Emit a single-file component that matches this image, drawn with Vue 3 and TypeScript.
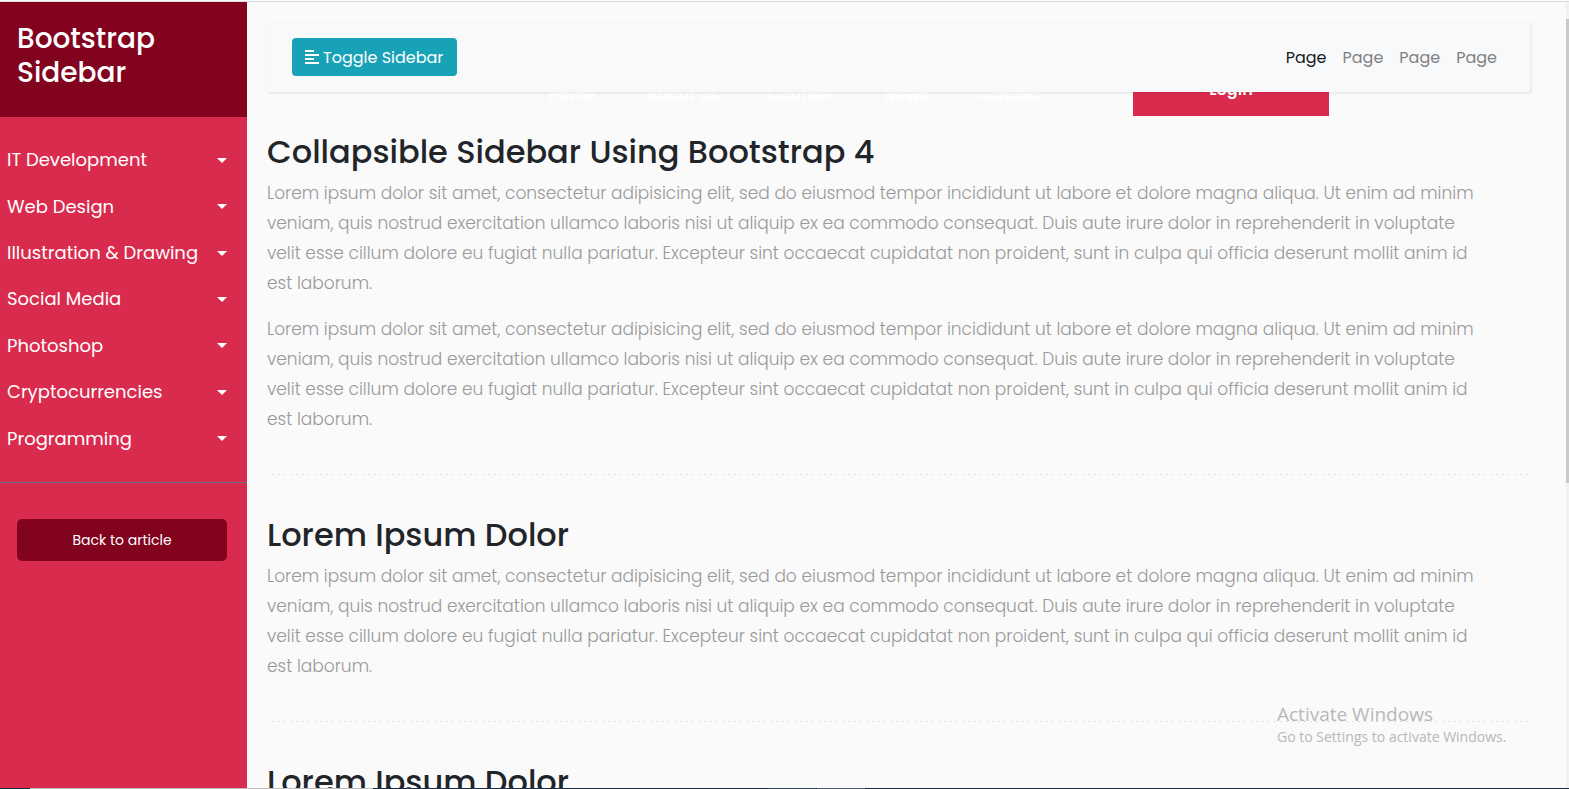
<script setup lang="ts">
import { ref } from 'vue'

const collapsed = ref(false)
const topics: string[] = [
  'IT Development',
  'Web Design',
  'Illustration & Drawing',
  'Social Media',
  'Photoshop',
  'Cryptocurrencies',
  'Programming',
]
const siteLinks: string[] = ['Home', 'About us', 'Courses', 'News', 'Contact']
const pages: string[] = ['Page', 'Page', 'Page', 'Page']

const lorem =
  'Lorem ipsum dolor sit amet, consectetur adipisicing elit, sed do eiusmod tempor incididunt ut labore et dolore magna aliqua. Ut enim ad minim veniam, quis nostrud exercitation ullamco laboris nisi ut aliquip ex ea commodo consequat. Duis aute irure dolor in reprehenderit in voluptate velit esse cillum dolore eu fugiat nulla pariatur. Excepteur sint occaecat cupidatat non proident, sunt in culpa qui officia deserunt mollit anim id est laborum.'

interface Section {
  title: string
  paragraphs: string[]
}
const sections: Section[] = [
  { title: 'Collapsible Sidebar Using Bootstrap 4', paragraphs: [lorem, lorem] },
  { title: 'Lorem Ipsum Dolor', paragraphs: [lorem] },
  { title: 'Lorem Ipsum Dolor', paragraphs: [] },
]
</script>

<template>
  <div class="screen">
    <div class="page">
      <aside v-show="!collapsed" class="sidebar">
        <header class="sidebar-header">
          <h3>Bootstrap Sidebar</h3>
        </header>
        <ul class="topics">
          <li v-for="topic in topics" :key="topic">
            <a href="#" class="topic">{{ topic }}<span class="caret"></span></a>
          </li>
        </ul>
        <a href="#" class="back">Back to article</a>
      </aside>

      <main class="content">
        <div class="site-nav">
          <nav class="site-links">
            <a v-for="link in siteLinks" :key="link" href="#">{{ link }}</a>
          </nav>
          <button type="button" class="login">Login</button>
        </div>

        <nav class="navbar">
          <button type="button" class="toggle" @click="collapsed = !collapsed">
            <svg class="align-icon" viewBox="0 0 14 14" aria-hidden="true">
              <path d="M0 0h9v2H0zM0 4h14v2H0zM0 8h9v2H0zM0 12h14v2H0z" fill="currentColor" />
            </svg>
            <span class="label">Toggle Sidebar</span>
          </button>
          <div class="pages label">
            <a v-for="(page, i) in pages" :key="i" href="#" :class="{ active: i === 0 }">{{ page }}</a>
          </div>
        </nav>

        <section v-for="(section, i) in sections" :key="i" class="section">
          <h2>{{ section.title }}</h2>
          <p v-for="(text, j) in section.paragraphs" :key="j">{{ text }}</p>
        </section>
      </main>

      <div class="scrollbar"><div class="thumb"></div></div>
    </div>

    <div class="taskbar">
      <span class="start"></span><span class="search"></span><span class="gap"></span>
      <span class="app"></span><span class="app bright"></span>
    </div>

    <div class="watermark">
      <div class="watermark-title">Activate Windows</div>
      <div>Go to Settings to activate Windows.</div>
    </div>
  </div>
</template>

<style>
body {
  margin: 0;
  background: #fafafa;
}
</style>

<style scoped>
* {
  box-sizing: border-box;
}
a {
  color: inherit;
  text-decoration: none;
}
button {
  border: 0;
  font: inherit;
  cursor: pointer;
}
.screen {
  position: relative;
  display: flex;
  flex-direction: column;
  height: 100vh;
  overflow: hidden;
  font-family: Poppins, Inter, 'Open Sans', sans-serif;
  font-size: 16px;
  line-height: 24px;
  color: #212529;
}
.page {
  flex: 1;
  min-height: 0;
  display: flex;
  border-top: 1px solid #dedede;
  margin-top: 1px;
  background: #fafafa;
}
.sidebar {
  flex: none;
  width: 247px;
  background: #d92b4e;
  color: #fff;
}
.sidebar-header {
  padding: 20px 20px 27px 17px;
  background: #82031d;
}
h3 {
  margin: 0;
  font-size: 28px;
  line-height: 34px;
  font-weight: 500;
}
.topics {
  display: grid;
  grid-auto-rows: 1fr;
  height: 366px;
  margin: 0;
  padding: 20px 0;
  list-style: none;
  border-bottom: 1px solid #6d6f8c;
}
.topic {
  display: flex;
  align-items: center;
  justify-content: space-between;
  height: 100%;
  padding: 0 20px 0 7px;
  font-size: 18px;
}
.caret {
  border: 5px solid transparent;
  border-top-color: #fff;
  border-bottom: 0;
}
.back {
  display: block;
  margin: 36px 20px 0 17px;
  padding: 10px;
  border-radius: 5px;
  background: #82031d;
  font-size: 14px;
  line-height: 22px;
  text-align: center;
}
.content {
  position: relative;
  flex: 1;
  min-width: 0;
  padding: 20px 36px 0 20px;
  overflow: hidden;
}
.site-nav {
  position: absolute;
  top: 62px;
  right: 237px;
  display: flex;
  align-items: center;
  gap: 90px;
  font-weight: 600;
  color: #fff;
}
.site-links {
  display: grid;
  grid-template-columns: 48px 72px 66px 43px 66px;
  gap: 50px;
  padding-top: 10px;
  white-space: nowrap;
}
.login {
  width: 196px;
  height: 52px;
  padding: 0;
  background: #d92b4e;
  color: #fff;
}
.navbar {
  position: relative;
  display: flex;
  align-items: center;
  justify-content: space-between;
  height: 70px;
  margin-bottom: 40px;
  padding: 0 33px 0 25px;
  background: #f8f9fb;
  box-shadow: 1px 1px 3px rgba(0, 0, 0, 0.1);
}
.toggle {
  display: flex;
  align-items: center;
  gap: 4px;
  width: 165px;
  height: 38px;
  padding: 0 13px;
  border-radius: 4px;
  background: #17a2b8;
  color: #fff;
  white-space: nowrap;
}
.label {
  padding-top: 2px;
}
.align-icon {
  flex: none;
  width: 14px;
  height: 14px;
}
.pages {
  display: flex;
  gap: 16px;
  color: #808182;
}
.active {
  color: #191919;
}
.section + .section {
  margin-top: 40px;
  padding-top: 41px;
  background: repeating-linear-gradient(90deg, #ddd 0 1px, transparent 1px 5px, #ddd 5px 6px) top / 100% 1px
    no-repeat;
}
h2 {
  margin: 0 0 6px;
  font-size: 32px;
  line-height: 40px;
  font-weight: 500;
}
p {
  margin: 0;
  padding-right: 44px;
  font-size: 17px;
  line-height: 30px;
  font-weight: 300;
  color: #999;
}
p + p {
  margin-top: 16px;
}
.scrollbar {
  flex: none;
  width: 3px;
  padding-top: 17px;
  background: #f1f1f1;
}
.thumb {
  height: 60.3%;
  background: #c9c9c9;
}
.taskbar {
  flex: none;
  display: flex;
  height: 1px;
  background: #1b2c42;
}
.start {
  width: 30px;
}
.search {
  width: 343px;
  background: #bdbdbd;
}
.gap {
  width: 395px;
}
.app {
  width: 48px;
  margin-right: 1px;
  background: #34465a;
}
.bright {
  background: #4d5e70;
}
.watermark {
  position: absolute;
  right: 56px;
  bottom: 42px;
  width: 236px;
  font-family: 'Segoe UI', 'Open Sans', sans-serif;
  font-size: 14px;
  line-height: 20px;
  color: #b8b8b8;
  white-space: nowrap;
  pointer-events: none;
}
.watermark-title {
  font-size: 19px;
  line-height: 25px;
}
</style>
